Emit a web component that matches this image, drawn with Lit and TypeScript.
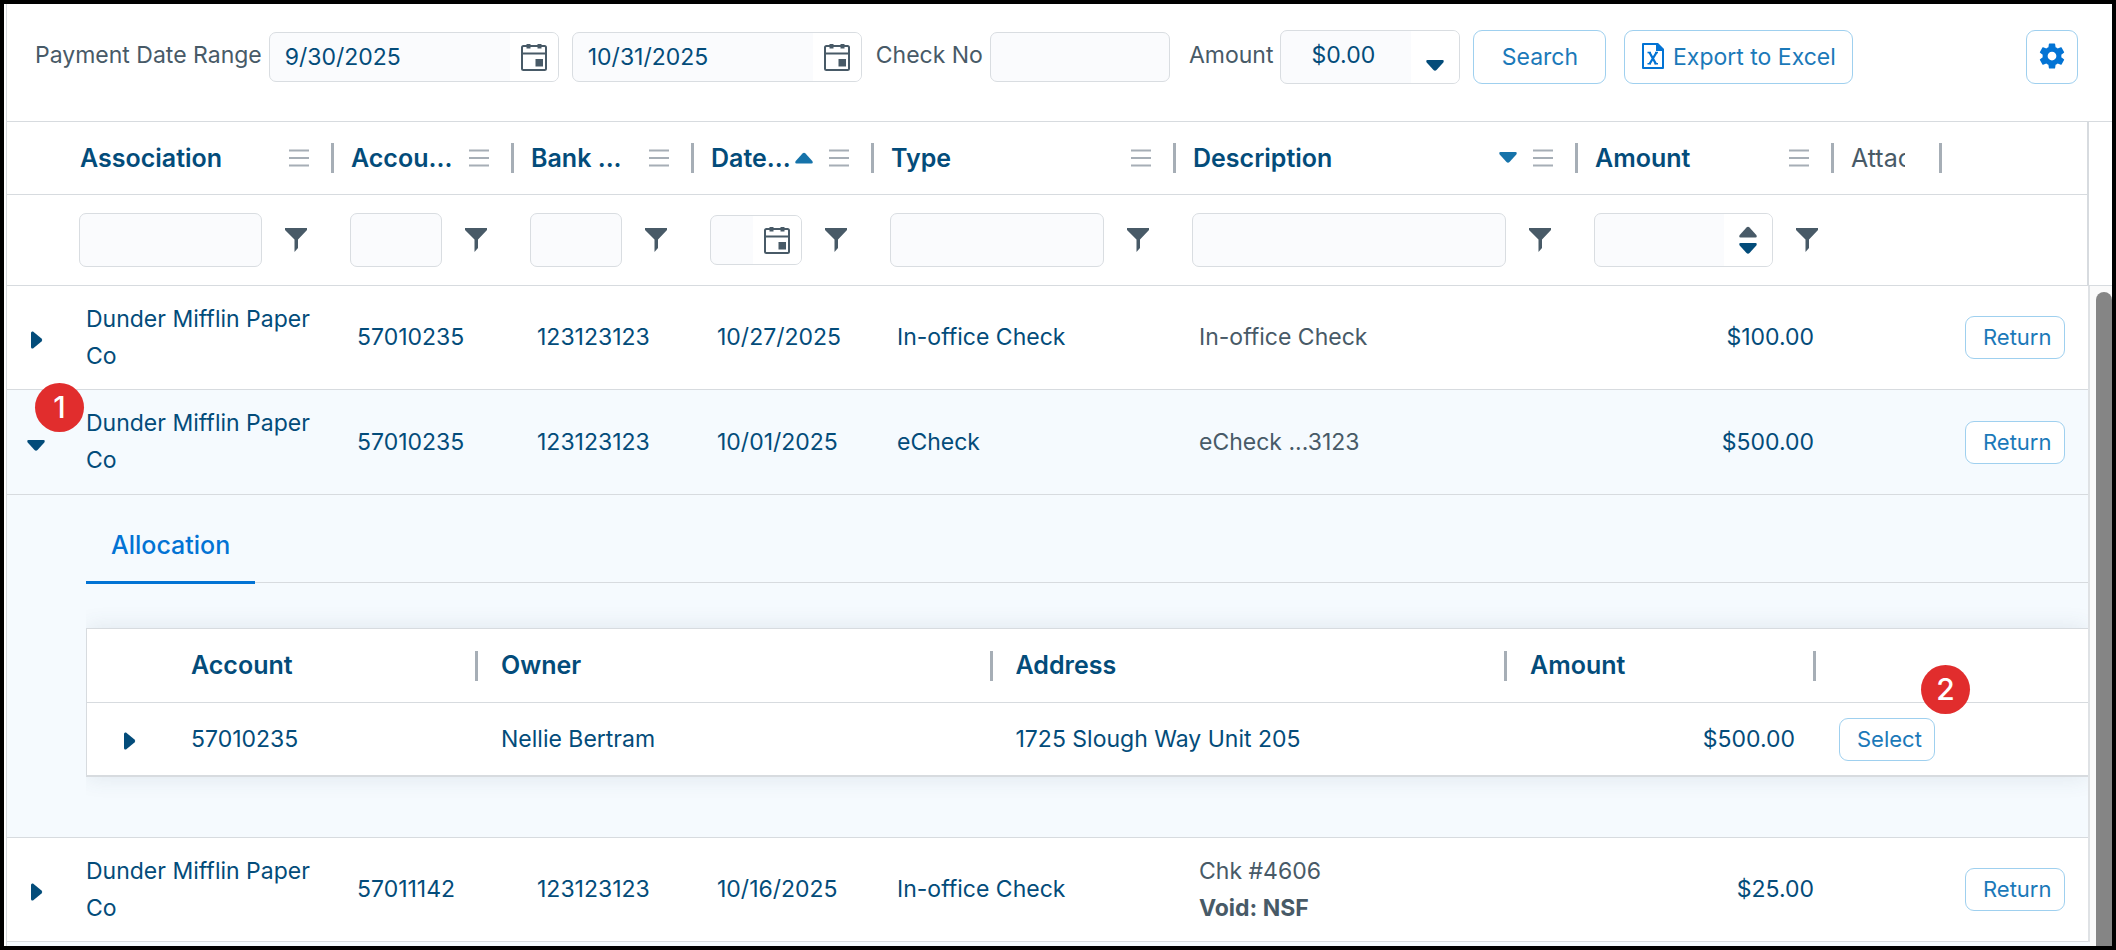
import { LitElement, html, css, svg, nothing } from "lit";
import { customElement } from "lit/decorators.js";

type Column = {
  title: string;
  cls: string;
  sort?: "up" | "down";
  filter?: "text" | "date" | "number";
  menu?: boolean;
};

type Payment = {
  association: string;
  account: string;
  bank: string;
  date: string;
  type: string;
  description: string;
  note?: string;
  amount: string;
  expanded?: boolean;
};

const COLUMNS: Column[] = [
  { title: "Association", cls: "c-assoc", filter: "text", menu: true },
  { title: "Accou...", cls: "c-short", filter: "text", menu: true },
  { title: "Bank ...", cls: "c-short", filter: "text", menu: true },
  { title: "Date...", cls: "c-short", filter: "date", sort: "up", menu: true },
  { title: "Type", cls: "c-type", filter: "text", menu: true },
  { title: "Description", cls: "c-desc", filter: "text", sort: "down", menu: true },
  { title: "Amount", cls: "c-amount", filter: "number", menu: true },
];

const PAYMENTS: Payment[] = [
  { association: "Dunder Mifflin Paper Co", account: "57010235", bank: "123123123", date: "10/27/2025", type: "In-office Check", description: "In-office Check", amount: "$100.00" },
  { association: "Dunder Mifflin Paper Co", account: "57010235", bank: "123123123", date: "10/01/2025", type: "eCheck", description: "eCheck ...3123", amount: "$500.00", expanded: true },
  { association: "Dunder Mifflin Paper Co", account: "57011142", bank: "123123123", date: "10/16/2025", type: "In-office Check", description: "Chk #4606", note: "Void: NSF", amount: "$25.00" },
];

const caret = (dir: "up" | "down" | "right") => {
  const d = {
    up: "M7.500 1.500 Q9 0 10.500 1.500 L17.300 9 Q18.500 11.500 16.500 11.500 H1.500 Q-.5 11.500 .7 9 Z",
    down: "M.7 2.500 Q-.5 0 1.500 0 H16.500 Q18.500 0 17.300 2.500 L10.500 10 Q9 11.500 7.500 10 Z",
    right: "M0 2 Q0 0 2 .5 L10.500 7.500 Q12 9 10.500 10.500 L2 17.500 Q0 18 0 16 Z",
  }[dir];
  const [w, h] = dir === "right" ? [12, 18] : [18, 12];
  return html`<svg class="caret" width=${w} height=${h} viewBox="0 0 ${w} ${h}" aria-hidden="true">${svg`<path fill="currentColor" d=${d} />`}</svg>`;
};

const calendarIcon = html`<svg width="26" height="27" viewBox="0 0 26 27" aria-hidden="true">
  <rect x="1" y="2" width="24" height="24" rx="1.500" fill="none" stroke="currentColor" stroke-width="2" />
  <path d="M1 9.500H25" stroke="currentColor" stroke-width="2" />
  <path d="M7.500 0V4.500M18.500 0V4.500" stroke="currentColor" stroke-width="4" />
  <rect x="14.500" y="15" width="7.500" height="7.500" fill="currentColor" />
</svg>`;

const menuIcon = html`<svg width="20" height="18" viewBox="0 0 20 18" aria-hidden="true">
  <path d="M0 1.500H20M0 9H20M0 16.500H20" stroke="currentColor" stroke-width="2" />
</svg>`;

const funnelIcon = html`<svg width="22" height="24" viewBox="0 0 22 24" aria-hidden="true">
  <path d="M0 0H22V2L13 11.500V20L9.500 24V11.500L0 2Z" fill="currentColor" />
</svg>`;

const excelIcon = html`<svg width="22" height="26" viewBox="0 0 22 26" aria-hidden="true">
  <path d="M1 1H15L21 7V25H1Z" fill="none" stroke="currentColor" stroke-width="2" stroke-linejoin="round" />
  <path d="M14 0H16L22 6V8H14Z" fill="currentColor" />
  <path d="M7.500 9.500L14 21M14.500 9.500L7.500 21" fill="none" stroke="currentColor" stroke-width="2.300" />
  <path d="M5.500 9.500H9M13 9.500H16M5.500 20.800H9M12.500 20.800H16" fill="none" stroke="currentColor" stroke-width="1.600" />
</svg>`;

const gearIcon = html`<svg width="30" height="30" viewBox="0 0 24 24" aria-hidden="true">
  <path fill="currentColor" d="M19.430 12.980c.04-.32.07-.64.07-.98s-.03-.66-.07-.98l2.110-1.650c.19-.15.24-.42.12-.64l-2-3.460c-.12-.22-.39-.3-.61-.22l-2.490 1c-.52-.4-1.080-.73-1.690-.98l-.38-2.650C14.460 2.180 14.250 2 14 2h-4c-.25 0-.46.18-.49.42l-.38 2.650c-.61.25-1.170.59-1.690.98l-2.490-1c-.23-.09-.49 0-.61.22l-2 3.460c-.13.22-.07.49.12.64l2.110 1.650c-.04.32-.07.65-.07.98s.03.66.07.98l-2.110 1.650c-.19.15-.24.42-.12.64l2 3.460c.12.22.39.3.61.22l2.490-1c.52.4 1.080.73 1.690.98l.38 2.650c.03.24.24.42.49.42h4c.25 0 .46-.18.49-.42l.38-2.650c.61-.25 1.170-.59 1.690-.98l2.490 1c.23.09.49 0 .61-.22l2-3.460c.12-.22.07-.49-.12-.64zM12 15.500a3.500 3.500 0 1 1 0-7 3.500 3.500 0 0 1 0 7z" />
</svg>`;

@customElement("app-root")
export class AppRoot extends LitElement {
  static styles = css`
    :host {
      display: flex;
      flex-direction: column;
      box-sizing: border-box;
      height: 100vh;
      overflow: hidden;
      border: 4px solid #000;
      padding-left: 2px;
      background: #fff;
      font-family: Inter, "Liberation Sans", sans-serif;
      font-size: 23px;
      line-height: 37px;
      color: #034c7a;
    }
    * {
      box-sizing: border-box;
    }
    button,
    input {
      font: inherit;
      color: inherit;
      margin: 0;
    }
    button {
      padding: 0;
      border: 0;
      background: none;
      cursor: pointer;
    }
    svg {
      display: block;
      flex: none;
    }
    .toolbar {
      display: flex;
      align-items: center;
      height: 117px;
      padding: 0 34px 11px 28px;
      border-left: 1px solid #d7dbdf;
    }
    .label {
      color: #485a67;
      white-space: nowrap;
      padding-bottom: 4px;
      margin-right: 7px;
    }
    .field {
      display: flex;
      height: 54px;
      min-width: 0;
      border: 1px solid #d9dde1;
      border-radius: 7px;
      background: #fafbfd;
      overflow: hidden;
    }
    .field.short {
      height: 50px;
    }
    .field input {
      flex: 1;
      width: 0;
      min-width: 0;
      border: 0;
      outline: 0;
      padding: 0 15px;
      background: transparent;
    }
    .field .addon {
      display: flex;
      flex-direction: column;
      align-items: center;
      justify-content: center;
      gap: 5px;
      flex: none;
      width: 48px;
      background: #fff;
      color: #485a67;
    }
    .field .navy {
      color: #034c7a;
    }
    .addon.low {
      padding-top: 18px;
    }
    .range {
      display: flex;
      gap: 13px;
      margin-right: 14px;
    }
    .range .field {
      width: 290px;
    }
    .check {
      width: 180px;
      margin-right: 19px;
    }
    .money {
      width: 180px;
      margin-right: 13px;
    }
    .field.money input {
      padding: 0 0 4px 30px;
    }
    .btn {
      display: inline-flex;
      align-items: center;
      justify-content: center;
      gap: 9px;
      height: 54px;
      border: 1px solid #9fd0ef;
      border-radius: 9px;
      background: #fff;
      color: #1b79b9;
      white-space: nowrap;
    }
    .search {
      width: 133px;
      margin-right: 18px;
    }
    .export {
      width: 229px;
    }
    .settings {
      width: 52px;
      margin-left: auto;
    }
    .vivid {
      display: flex;
      padding-bottom: 3px;
      color: #0273d4;
    }
    .small {
      height: 43px;
      padding: 0 12px 0 17px;
      font-size: 22px;
    }
    table {
      width: 100%;
      table-layout: fixed;
      border-collapse: separate;
      border-spacing: 0;
    }
    th,
    td {
      padding: 0;
      text-align: left;
      font-weight: 400;
    }
    .c-exp {
      width: 56px;
    }
    .c-assoc {
      width: 271px;
    }
    .c-short {
      width: 180px;
    }
    .c-type {
      width: 302px;
    }
    .c-amount {
      width: 256px;
    }
    .c-attach {
      width: 108px;
    }
    .c-action {
      width: 145px;
    }
    .grid {
      flex: 1;
      min-height: 0;
      display: flex;
      flex-direction: column;
      border: solid #d7dbdf;
      border-width: 1px 0 0 1px;
    }
    .grid-head {
      flex: none;
      padding-right: 23px;
      border-bottom: 1px solid #d7dbdf;
    }
    .grid-head table {
      border-right: 2px solid #d7dbdf;
    }
    .head-cell {
      display: flex;
      align-items: center;
      justify-content: flex-end;
      height: 72px;
      padding-left: 17px;
      font-size: 25px;
      font-weight: 600;
      border-right: 3px solid transparent;
      border-image: linear-gradient(transparent 21px, #a6aeb6 21px, #a6aeb6 51px, transparent 51px) 1 / 0 3px 0 0;
    }
    .head-cell.plain {
      font-weight: 400;
      color: #485a67;
      justify-content: flex-start;
    }
    .head-cell .title {
      flex: 1;
      min-width: 0;
      overflow: hidden;
      white-space: nowrap;
    }
    .head-cell .clip {
      flex: none;
      width: 54px;
      overflow: hidden;
    }
    .sort {
      display: flex;
      color: #1673aa;
      margin-right: 16px;
    }
    .menu {
      color: #a6aeb6;
      margin-right: 22px;
    }
    .filters td {
      height: 91px;
      border-top: 1px solid #d7dbdf;
    }
    .filter {
      display: flex;
      align-items: center;
      gap: 13px;
      padding: 0 17px 0 16px;
    }
    .filter.number {
      padding-right: 6px;
    }
    .filter .field {
      flex: 1;
    }
    .funnel {
      display: flex;
      justify-content: center;
      width: 42px;
      color: #485a67;
    }
    .grid-body {
      flex: 1;
      min-height: 0;
      display: flex;
      align-items: flex-start;
      overflow: hidden;
      background: #f5fafe;
    }
    .rows {
      flex: 1;
      min-width: 0;
      width: auto;
      border-right: 2px solid #dfe2e5;
    }
    .track {
      align-self: stretch;
      flex: none;
      width: 22px;
      padding: 6px 0 0 6px;
      background: #fafafa;
    }
    .thumb {
      height: 100%;
      border-radius: 8px 8px 0 0;
      background: #858585;
    }
    .row > td {
      height: 104px;
      padding: 0 18px 0 23px;
      background: #fff;
      border-bottom: 1px solid #d7dbdf;
    }
    .row.open > td {
      height: 105px;
      background: #f5fafe;
    }
    .row > .toggle {
      padding: 4px 0 0 20px;
    }
    .row.open > .toggle {
      padding-top: 8px;
      padding-left: 19px;
    }
    .toggle button {
      display: flex;
      justify-content: center;
      width: 20px;
    }
    .row > .plain {
      color: #485a67;
    }
    .plain b {
      display: block;
      font-weight: 700;
    }
    .row > .num,
    .num {
      text-align: right;
      padding-right: 21px;
    }
    .row > .act {
      padding: 0 0 0 22px;
    }
    .detail > td {
      background: #f5fafe;
      border-bottom: 1px solid #d7dbdf;
      padding: 0 0 60px 79px;
    }
    .tabs {
      display: flex;
      height: 88px;
      border-bottom: 1px solid #d7dbdf;
      margin-bottom: 45px;
    }
    .tab {
      height: 89px;
      padding: 14px 25px 0;
      border-bottom: 3px solid #0273d4;
      color: #0273d4;
      font-size: 25px;
      font-weight: 500;
    }
    .card {
      border: 1px solid #d7dbdf;
      border-right: 0;
      background: #fff;
      box-shadow: 0 0 22px rgba(60, 80, 110, 0.12);
      clip-path: inset(-24px 0);
    }
    .card th {
      height: 74px;
      border-bottom: 1px solid #d7dbdf;
    }
    .card .head-cell {
      padding-left: 23px;
    }
    .card td {
      height: 73px;
      padding-left: 23px;
      border-bottom: 1px solid #d7dbdf;
    }
    .card .toggle {
      padding: 4px 0 0 33px;
    }
    .s-exp {
      width: 81px;
    }
    .s-account {
      width: 310px;
    }
    .s-amount {
      width: 309px;
    }
    .s-action {
      width: 272px;
    }
    .marked {
      position: relative;
    }
    .badge {
      position: absolute;
      z-index: 1;
      width: 49px;
      height: 49px;
      border-radius: 50%;
      background: #e12d2d;
      color: #fff;
      font-size: 30px;
      font-weight: 500;
      line-height: 49px;
      text-align: center;
    }
    .badge.one {
      left: 28px;
      top: -7px;
    }
    .badge.two {
      left: 105px;
      top: -38px;
    }
  `;

  private dateField(id: string, label: string, value = "") {
    return html`<div class="field short">
      <input id=${id} type="text" aria-label=${label} .value=${value} />
      <button class="addon" aria-label="Open calendar">${calendarIcon}</button>
    </div>`;
  }

  private filterCell(c: Column) {
    const label = "Filter";
    const field =
      c.filter === "date"
        ? this.dateField("filter-date", label)
        : html`<div class="field">
            <input type="text" aria-label=${label} />
            ${c.filter === "number"
              ? html`<span class="addon">
                  <button aria-label="Increase">${caret("up")}</button>
                  <button class="navy" aria-label="Decrease">${caret("down")}</button>
                </span>`
              : nothing}
          </div>`;
    return html`<td><div class="filter ${c.filter}">${field}<button class="funnel" aria-label="Filter">${funnelIcon}</button></div></td>`;
  }

  private cols() {
    return html`<colgroup>
      <col class="c-exp" />
      ${COLUMNS.map((c) => html`<col class=${c.cls} />`)}
      <col class="c-attach" />
      <col class="c-action" />
    </colgroup>`;
  }

  private detail() {
    return html`<tr class="detail">
      <td colspan="10">
        <div class="tabs" role="tablist"><button class="tab" role="tab" aria-selected="true">Allocation</button></div>
        <div class="card">
          <table>
            <colgroup>
              <col class="s-exp" /><col class="s-account" /><col /><col /><col class="s-amount" /><col class="s-action" />
            </colgroup>
            <thead>
              <tr>
                <th></th>
                ${["Account", "Owner", "Address", "Amount"].map(
                  (t) => html`<th><div class="head-cell"><span class="title">${t}</span></div></th>`
                )}
                <th></th>
              </tr>
            </thead>
            <tbody>
              <tr>
                <td class="toggle"><button aria-label="Expand">${caret("right")}</button></td>
                <td>57010235</td>
                <td>Nellie Bertram</td>
                <td>1725 Slough Way Unit 205</td>
                <td class="num">$500.00</td>
                <td class="marked"><button class="btn small">Select</button><span class="badge two">2</span></td>
              </tr>
            </tbody>
          </table>
        </div>
      </td>
    </tr>`;
  }

  private row(p: Payment) {
    return html`<tr class="row ${p.expanded ? "open" : ""}">
        <td class="toggle ${p.expanded ? "marked" : ""}">
          <button aria-label=${p.expanded ? "Collapse" : "Expand"}>${caret(p.expanded ? "down" : "right")}</button>
          ${p.expanded ? html`<span class="badge one">1</span>` : nothing}
        </td>
        <td>${p.association}</td>
        <td>${p.account}</td>
        <td>${p.bank}</td>
        <td>${p.date}</td>
        <td>${p.type}</td>
        <td class="plain">${p.description}${p.note ? html`<b>${p.note}</b>` : nothing}</td>
        <td class="num">${p.amount}</td>
        <td></td>
        <td class="act"><button class="btn small">Return</button></td>
      </tr>
      ${p.expanded ? this.detail() : nothing}`;
  }

  render() {
    return html`
      <div class="toolbar">
        <label class="label" for="from">Payment Date Range</label>
        <div class="range">
          ${this.dateField("from", "Payment Date Range", "9/30/2025")}
          ${this.dateField("to", "Payment Date Range", "10/31/2025")}
        </div>
        <label class="label" for="check">Check No</label>
        <div class="field short check"><input id="check" type="text" /></div>
        <label class="label" for="amount">Amount</label>
        <div class="field money">
          <input id="amount" type="text" .value=${"$0.00"} />
          <button class="addon low navy" aria-label="Decrease">${caret("down")}</button>
        </div>
        <button class="btn search">Search</button>
        <button class="btn export"><span class="vivid">${excelIcon}</span>Export to Excel</button>
        <button class="btn settings" aria-label="Settings"><span class="vivid">${gearIcon}</span></button>
      </div>
      <div class="grid">
        <div class="grid-head">
          <table>
            ${this.cols()}
            <thead>
              <tr>
                <th></th>
                ${COLUMNS.map(
                  (c) => html`<th>
                    <div class="head-cell">
                      <span class="title">${c.title}</span>
                      ${c.sort ? html`<span class="sort">${caret(c.sort)}</span>` : nothing}
                      <button class="menu" aria-label="Column menu">${menuIcon}</button>
                    </div>
                  </th>`
                )}
                <th><div class="head-cell plain"><span class="clip">Attac</span></div></th>
                <th></th>
              </tr>
            </thead>
            <tbody>
              <tr class="filters">
                <td></td>
                ${COLUMNS.map((c) => this.filterCell(c))}
                <td></td>
                <td></td>
              </tr>
            </tbody>
          </table>
        </div>
        <div class="grid-body">
          <table class="rows">
            ${this.cols()}
            <tbody>
              ${PAYMENTS.map((p) => this.row(p))}
            </tbody>
          </table>
          <div class="track"><div class="thumb"></div></div>
        </div>
      </div>
    `;
  }
}
